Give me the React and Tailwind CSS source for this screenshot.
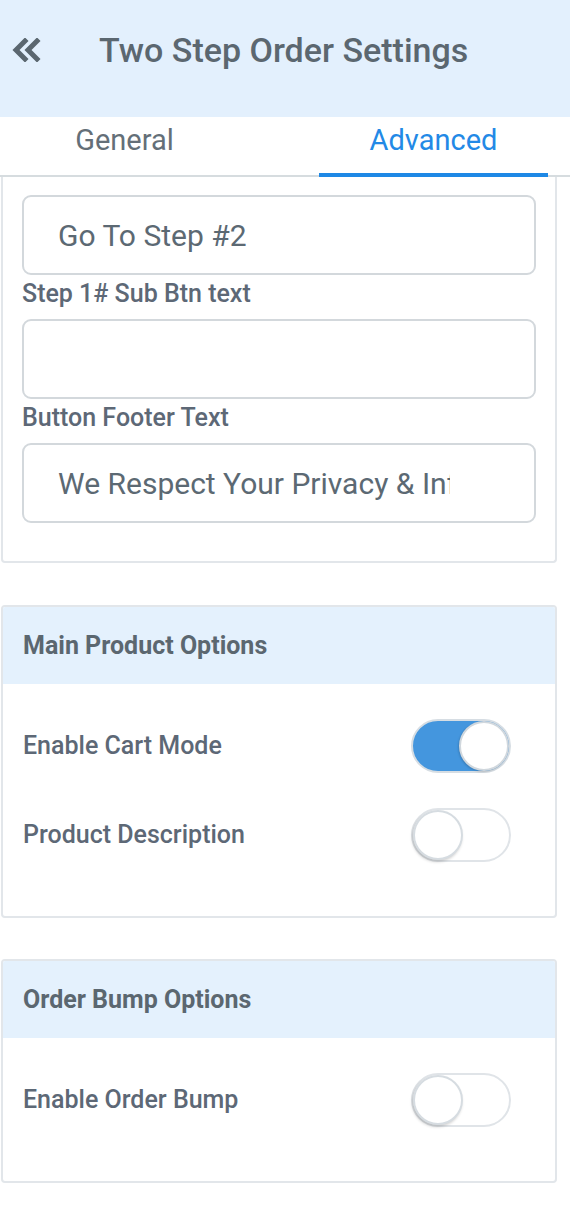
import React from "react";

function Toggle({ on }) {
  return (
    <div
      className={
        on
          ? "relative w-[100px] h-[54px] rounded-full border-2 border-[#d6dde3] bg-[#4496de]"
          : "relative w-[100px] h-[54px] rounded-full border-2 border-[#e0e4e8] bg-white"
      }
    >
      <div
        className={
          on
            ? "absolute top-0 right-0 w-[50px] h-[50px] rounded-full bg-white border-2 border-[#d0d7dd] shadow-[-1px_1px_2px_rgba(0,0,0,0.15)]"
            : "absolute top-0 left-0 w-[50px] h-[50px] rounded-full bg-white border-2 border-[#d6dce1] shadow-[-1px_2px_3px_rgba(0,0,0,0.18)]"
        }
      />
    </div>
  );
}

function Field({ value }) {
  return (
    <input
      readOnly
      value={value}
      className="block h-[80px] w-[514px] rounded-[9px] border-2 border-[#d3d8dc] bg-white pl-[34px] pr-[84px] text-[30px] text-[#5c6973] outline-none"
      style={{ fontFamily: "Roboto, 'Noto Sans', sans-serif" }}
    />
  );
}

function Label({ children }) {
  return (
    <div className="pt-[5px] pb-[11px] text-[25px] leading-[28px] font-medium text-[#5d6876]">
      {children}
    </div>
  );
}

function Row({ label, on }) {
  return (
    <div className="flex items-center justify-between h-[54px] pl-[20px] pr-[44px]">
      <span className="text-[25px] font-medium text-[#5d6876]">{label}</span>
      <Toggle on={on} />
    </div>
  );
}

export default function App() {
  return (
    <div className="w-[570px] min-h-[1208px] bg-white" style={{ fontFamily: "Roboto, 'Noto Sans', sans-serif" }}>
      {/* Header */}
      <div className="h-[117px] bg-[#e3f0fd] flex items-start pt-[29px]">
        <div className="pl-[12px] pt-[9px] w-[99px]">
          <svg width="29" height="24" viewBox="0 0 29 24" fill="none">
            <path d="M13 3 L4 12 L13 21" stroke="#5b6770" strokeWidth="5" strokeLinejoin="miter" strokeLinecap="square" />
            <path d="M25 3 L16 12 L25 21" stroke="#5b6770" strokeWidth="5" strokeLinejoin="miter" strokeLinecap="square" />
          </svg>
        </div>
        <h1 className="text-[34px] leading-[42px] font-medium text-[#5b6770]">Two Step Order Settings</h1>
      </div>

      {/* Tabs */}
      <div className="relative h-[60px] border-b-2 border-[#d6dcdf] flex pl-[10px] gap-[80px]">
        <div className="w-[229px] text-center pt-[3px] text-[29px] leading-[40px] text-[#646f78]">General</div>
        <div className="relative w-[229px] text-center pt-[3px] text-[29px] leading-[40px] text-[#2389e6]">
          Advanced
          <div className="absolute left-0 right-0 bottom-[-2px] h-[4px] bg-[#1e88e5]" />
        </div>
      </div>

      {/* Card 1 (scrolled) */}
      <div className="ml-[1px] w-[556px] border-2 border-t-0 border-[#e2e6ea] rounded-b-[4px] px-[19px] pt-[18px] pb-[38px]">
        <Field value="Go To Step #2" />
        <Label>Step 1# Sub Btn text</Label>
        <Field value="" />
        <Label>Button Footer Text</Label>
        <Field value="We Respect Your Privacy & Information" />
      </div>

      {/* Card 2 */}
      <div className="mt-[42px] ml-[1px] w-[556px] border-2 border-[#e2e6ea] rounded-[4px] overflow-hidden">
        <div className="h-[77px] bg-[#e4f1fd] flex items-center pl-[20px]">
          <span className="text-[25px] font-bold text-[#5b6770]">Main Product Options</span>
        </div>
        <div className="pt-[35px] pb-[54px] flex flex-col gap-[35px]">
          <Row label="Enable Cart Mode" on={true} />
          <Row label="Product Description" on={false} />
        </div>
      </div>

      {/* Card 3 */}
      <div className="mt-[41px] ml-[1px] w-[556px] border-2 border-[#e2e6ea] rounded-[4px] overflow-hidden">
        <div className="h-[77px] bg-[#e4f1fd] flex items-center pl-[20px]">
          <span className="text-[25px] font-bold text-[#5b6770]">Order Bump Options</span>
        </div>
        <div className="pt-[35px] pb-[54px] flex flex-col">
          <Row label="Enable Order Bump" on={false} />
        </div>
      </div>
    </div>
  );
}
